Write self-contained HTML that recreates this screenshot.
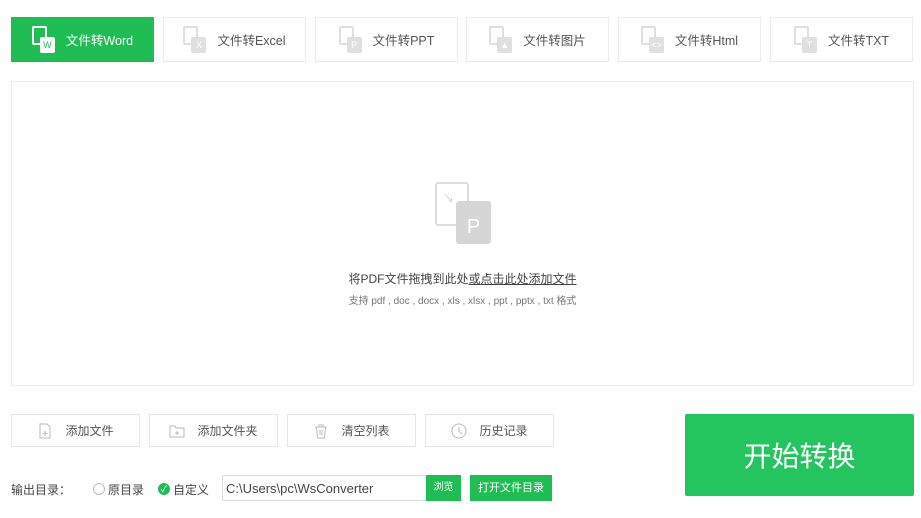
<!DOCTYPE html>
<html><head><meta charset="utf-8"><style>
*{box-sizing:border-box;margin:0;padding:0}
body{width:921px;height:518px;background:#fff;font-family:"Liberation Sans","Noto Sans CJK SC",sans-serif;position:relative;overflow:hidden;color:#555}
.tab{position:absolute;top:17px;height:45px;width:143px;border:1px solid #ececec;background:#fff;font-size:12.5px;color:#555;display:flex;align-items:center;justify-content:center}
.tab.on{background:#20bd55;border-color:#20bd55;color:#fff}
.ic{position:relative;width:24px;height:28px;margin-right:10px}
.ic .a{position:absolute;left:0;top:0;width:15px;height:19px;border:2px solid #e0e0e0;border-radius:2px;background:#fff}
.ic .b{position:absolute;left:8px;top:11px;width:15px;height:16px;background:#e0e0e0;border-radius:2px;font-size:9px;color:#fff;text-align:center;line-height:17px}
.on .ic .a{border-color:#fff;background:#20bd55}
.on .ic .b{background:#fff;color:#20bd55}
.box{position:absolute;left:11px;top:81px;width:903px;height:305px;border:1px solid #ececec}
.btn{position:absolute;top:414px;height:33px;width:129px;border:1px solid #e6e6e6;font-size:12px;color:#555;display:flex;align-items:center;justify-content:center;gap:12px}
.btn svg{width:16px;height:16px}
.go{position:absolute;left:685px;top:414px;width:229px;height:82px;background:#24c45f;color:#fff;font-size:28px;display:flex;align-items:center;justify-content:center;border-radius:2px}
</style></head><body>
<div class="tab on" style="left:11px"><div class="ic"><div class="a"></div><div class="b">W</div></div>文件转Word</div>
<div class="tab" style="left:163px"><div class="ic"><div class="a"></div><div class="b">X</div></div>文件转Excel</div>
<div class="tab" style="left:315px"><div class="ic"><div class="a"></div><div class="b">P</div></div>文件转PPT</div>
<div class="tab" style="left:466px"><div class="ic"><div class="a"></div><div class="b">▲</div></div>文件转图片</div>
<div class="tab" style="left:618px"><div class="ic"><div class="a"></div><div class="b">&lt;&gt;</div></div>文件转Html</div>
<div class="tab" style="left:770px"><div class="ic"><div class="a"></div><div class="b">T</div></div>文件转TXT</div>
<div class="box">
 <div style="position:absolute;left:423px;top:100px;width:34px;height:44px;border:2px solid #ddd;border-radius:3px"></div>
 <div style="position:absolute;left:431px;top:108px;color:#ccc;font-size:11px">↘</div>
 <div style="position:absolute;left:444px;top:119px;width:35px;height:43px;background:#d6d6d6;border-radius:3px;color:#fff;font-size:20px;text-align:center;line-height:52px">P</div>
 <div style="position:absolute;left:0;width:100%;top:188px;text-align:center;font-size:12px;color:#444">将PDF文件拖拽到此处<span style="text-decoration:underline">或点击此处添加文件</span></div>
 <div style="position:absolute;left:0;width:100%;top:210px;text-align:center;font-size:10px;color:#777">支持 pdf , doc , docx , xls , xlsx , ppt , pptx , txt 格式</div>
</div>
<div class="btn" style="left:11px"><svg viewBox="0 0 16 16" fill="none" stroke="#bbb"><path d="M3 1h7l3 3v11H3z"/><path d="M8 8v5M5.5 10.5h5"/></svg>添加文件</div>
<div class="btn" style="left:149px"><svg viewBox="0 0 16 16" fill="none" stroke="#bbb"><path d="M1 3h5l1 2h8v9H1z"/><path d="M8 8v4M6 10h4"/></svg>添加文件夹</div>
<div class="btn" style="left:287px"><svg viewBox="0 0 16 16" fill="none" stroke="#bbb"><path d="M2 4h12M6 4V2h4v2M3.5 4l1 11h7l1-11M7 7v5M9 7v5"/></svg>清空列表</div>
<div class="btn" style="left:425px"><svg viewBox="0 0 16 16" fill="none" stroke="#bbb"><circle cx="8" cy="8" r="7"/><path d="M8 4v4l3 3"/></svg>历史记录</div>
<div class="go">开始转换</div>
<div style="position:absolute;left:11px;top:481px;font-size:12px;color:#444">输出目录：</div>
<div style="position:absolute;left:93px;top:483px;width:12px;height:12px;border:1px solid #bbb;border-radius:50%"></div>
<div style="position:absolute;left:108px;top:481px;font-size:12px;color:#444">原目录</div>
<div style="position:absolute;left:158px;top:483px;width:12px;height:12px;background:#20bd55;border-radius:50%;color:#fff;font-size:9px;line-height:12px;text-align:center">✓</div>
<div style="position:absolute;left:173px;top:481px;font-size:12px;color:#444">自定义</div>
<div style="position:absolute;left:222px;top:475px;width:205px;height:26px;border:1px solid #ddd;font-size:13px;color:#444;padding:5px 0 0 3px">C:\Users\pc\WsConverter</div>
<div style="position:absolute;left:426px;top:475px;width:35px;height:26px;background:#20bd55;color:#fff;font-size:10px;text-align:center;line-height:26px">浏览</div>
<div style="position:absolute;left:470px;top:475px;width:82px;height:26px;background:#20bd55;color:#fff;font-size:11px;text-align:center;line-height:26px">打开文件目录</div>
</body></html>
